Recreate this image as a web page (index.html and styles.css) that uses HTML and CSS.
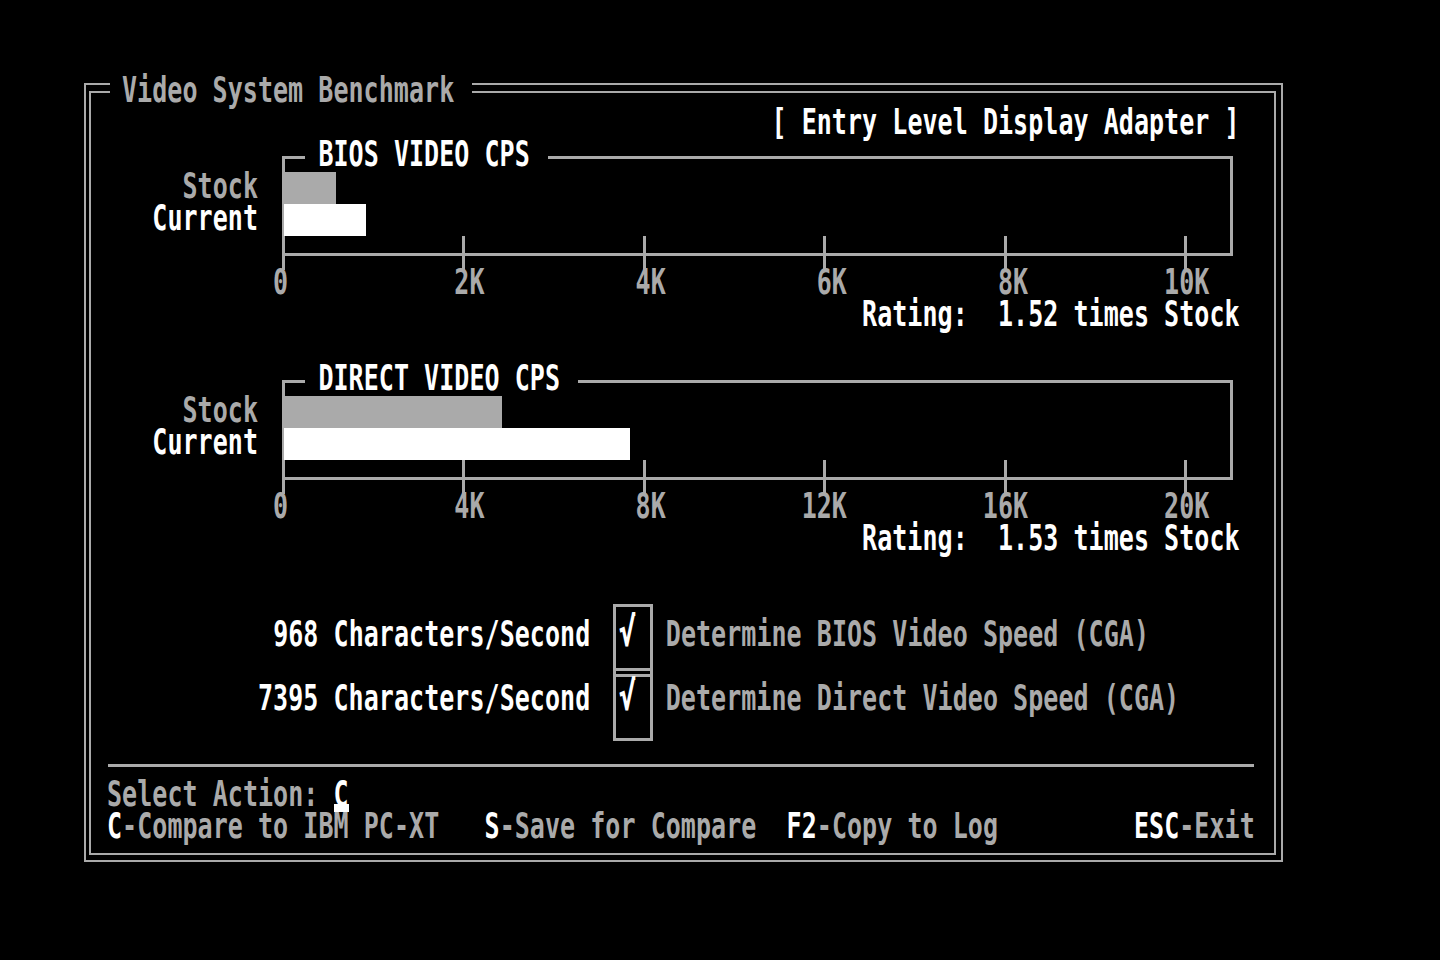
FILE: index.html
```html
<!DOCTYPE html>
<html lang="en">
<head>
<meta charset="utf-8">
<title>Video System Benchmark</title>
<link rel="stylesheet" href="styles.css">
</head>
<body>
<div class="frame">
  <div class="frame-title"><span class="t">Video System Benchmark</span></div>
  <div class="frame-inner">
    <div class="line"><span class="t">                                            <span class="w">[ Entry Level Display Adapter ]</span></span></div>

    <section class="chart">
      <div class="chart-body">
        <div class="series">
          <div class="line"><span class="t">Stock</span></div>
          <div class="line"><span class="t w">Current</span></div>
        </div>
        <div class="plot">
          <div class="legend"><span class="t w">BIOS VIDEO CPS</span></div>
          <div class="bar stock" style="width:52px"></div>
          <div class="bar current" style="width:82px"></div>
          <div class="ticks"><i></i><i></i><i></i><i></i><i></i><i></i></div>
        </div>
      </div>
      <div class="line axis"><span class="t">           0           2K          4K          6K          8K         10K</span></div>
      <div class="line"><span class="t w">                                                  Rating:  1.52 times Stock</span></div>
    </section>

    <section class="chart">
      <div class="chart-body">
        <div class="series">
          <div class="line"><span class="t">Stock</span></div>
          <div class="line"><span class="t w">Current</span></div>
        </div>
        <div class="plot">
          <div class="legend"><span class="t w">DIRECT VIDEO CPS</span></div>
          <div class="bar stock" style="width:218px"></div>
          <div class="bar current" style="width:346px"></div>
          <div class="ticks"><i></i><i></i><i></i><i></i><i></i><i></i></div>
        </div>
      </div>
      <div class="line axis"><span class="t">           0           4K          8K         12K         16K         20K</span></div>
      <div class="line"><span class="t w">                                                  Rating:  1.53 times Stock</span></div>
    </section>

    <div class="checks">
      <div class="line check-row"><span class="t">           <span class="w">968 Characters/Second</span>  <span class="w mark">√</span>  Determine BIOS Video Speed (CGA)</span></div>
      <div class="line check-row"><span class="t">          <span class="w">7395 Characters/Second</span>  <span class="w mark">√</span>  Determine Direct Video Speed (CGA)</span></div>
    </div>

    <div class="divider"></div>

    <div class="line prompt"><span class="t">Select Action: <span class="w">C</span></span></div>
    <div class="line"><span class="t"><span class="w">C</span>-Compare to IBM PC-XT   <span class="w">S</span>-Save for Compare  <span class="w">F2</span>-Copy to Log         <span class="w">ESC</span>-Exit</span></div>
  </div>
</div>
</body>
</html>
```

FILE: styles.css
```css
* {
  box-sizing: border-box;
}

html {
  background: #000;
}

body {
  margin: 0;
  padding: 83px 0 0 84px;
  min-height: 960px;
  background: #000;
  color: #aaaaaa;
  font-family: "DejaVu Sans Mono", "Liberation Mono", monospace;
  font-size: 25px;
  font-weight: bold;
  letter-spacing: 0.05px;
  line-height: 32px;
}

.frame {
  position: relative;
  width: 1199px;
  border: 2px solid #aaaaaa;
  padding: 6px 5px 5px 3px;
}

.frame-inner {
  border: 2px solid #aaaaaa;
  padding: 15px 0 9px 16px;
}

.frame-title {
  position: absolute;
  left: 24px;
  top: -9px;
  height: 32px;
  padding: 0 18px 0 12px;
  background: #000;
}

.line {
  height: 32px;
}

.t {
  display: inline-block;
  vertical-align: top;
  white-space: pre;
  transform: translateY(2.34px) scaleY(1.43);
  transform-origin: 0 24.66px;
}

.w {
  color: #ffffff;
}

.mark {
  display: inline-block;
  transform: scale(1.15, 1.12);
  transform-origin: 50% 85%;
}

/* charts */
.chart + .chart {
  margin-top: 32px;
}

.chart-body {
  display: flex;
  align-items: flex-start;
}

.series {
  width: 151px;
  margin-right: 24px;
  padding-top: 32px;
  text-align: right;
}

.plot {
  position: relative;
  width: 951px;
  height: 100px;
  margin-top: 16px;
  border: 3px solid #aaaaaa;
}

.legend {
  width: fit-content;
  height: 32px;
  margin: -19px 0 0 20px;
  padding: 0 18px 0 13.4px;
  background: #000;
}

.bar {
  height: 32px;
  margin-left: -1px;
}

.bar.stock {
  background: #aaaaaa;
}

.bar.current {
  background: #ffffff;
}

.ticks {
  position: absolute;
  left: -3px;
  bottom: -17px;
  width: 905px;
  height: 34px;
  display: flex;
  justify-content: space-between;
}

.ticks i {
  width: 3px;
  background: #aaaaaa;
}

.axis {
  margin-top: 12px;
}

/* checks */
.checks {
  margin-top: 64px;
  display: flex;
  flex-direction: column;
  gap: 32px;
}

.check-row {
  position: relative;
}

.check-row::before {
  content: "";
  position: absolute;
  left: 506px;
  top: -16px;
  width: 34px;
  height: 67px;
  border: 3px solid #aaaaaa;
}

.divider {
  width: 1146px;
  height: 3px;
  margin: 48px 0 13px 1px;
  background: #aaaaaa;
}

.prompt {
  position: relative;
}

.prompt::after {
  content: "";
  position: absolute;
  left: 226.5px;
  top: 24px;
  width: 15px;
  height: 8px;
  background: #ffffff;
}
```
